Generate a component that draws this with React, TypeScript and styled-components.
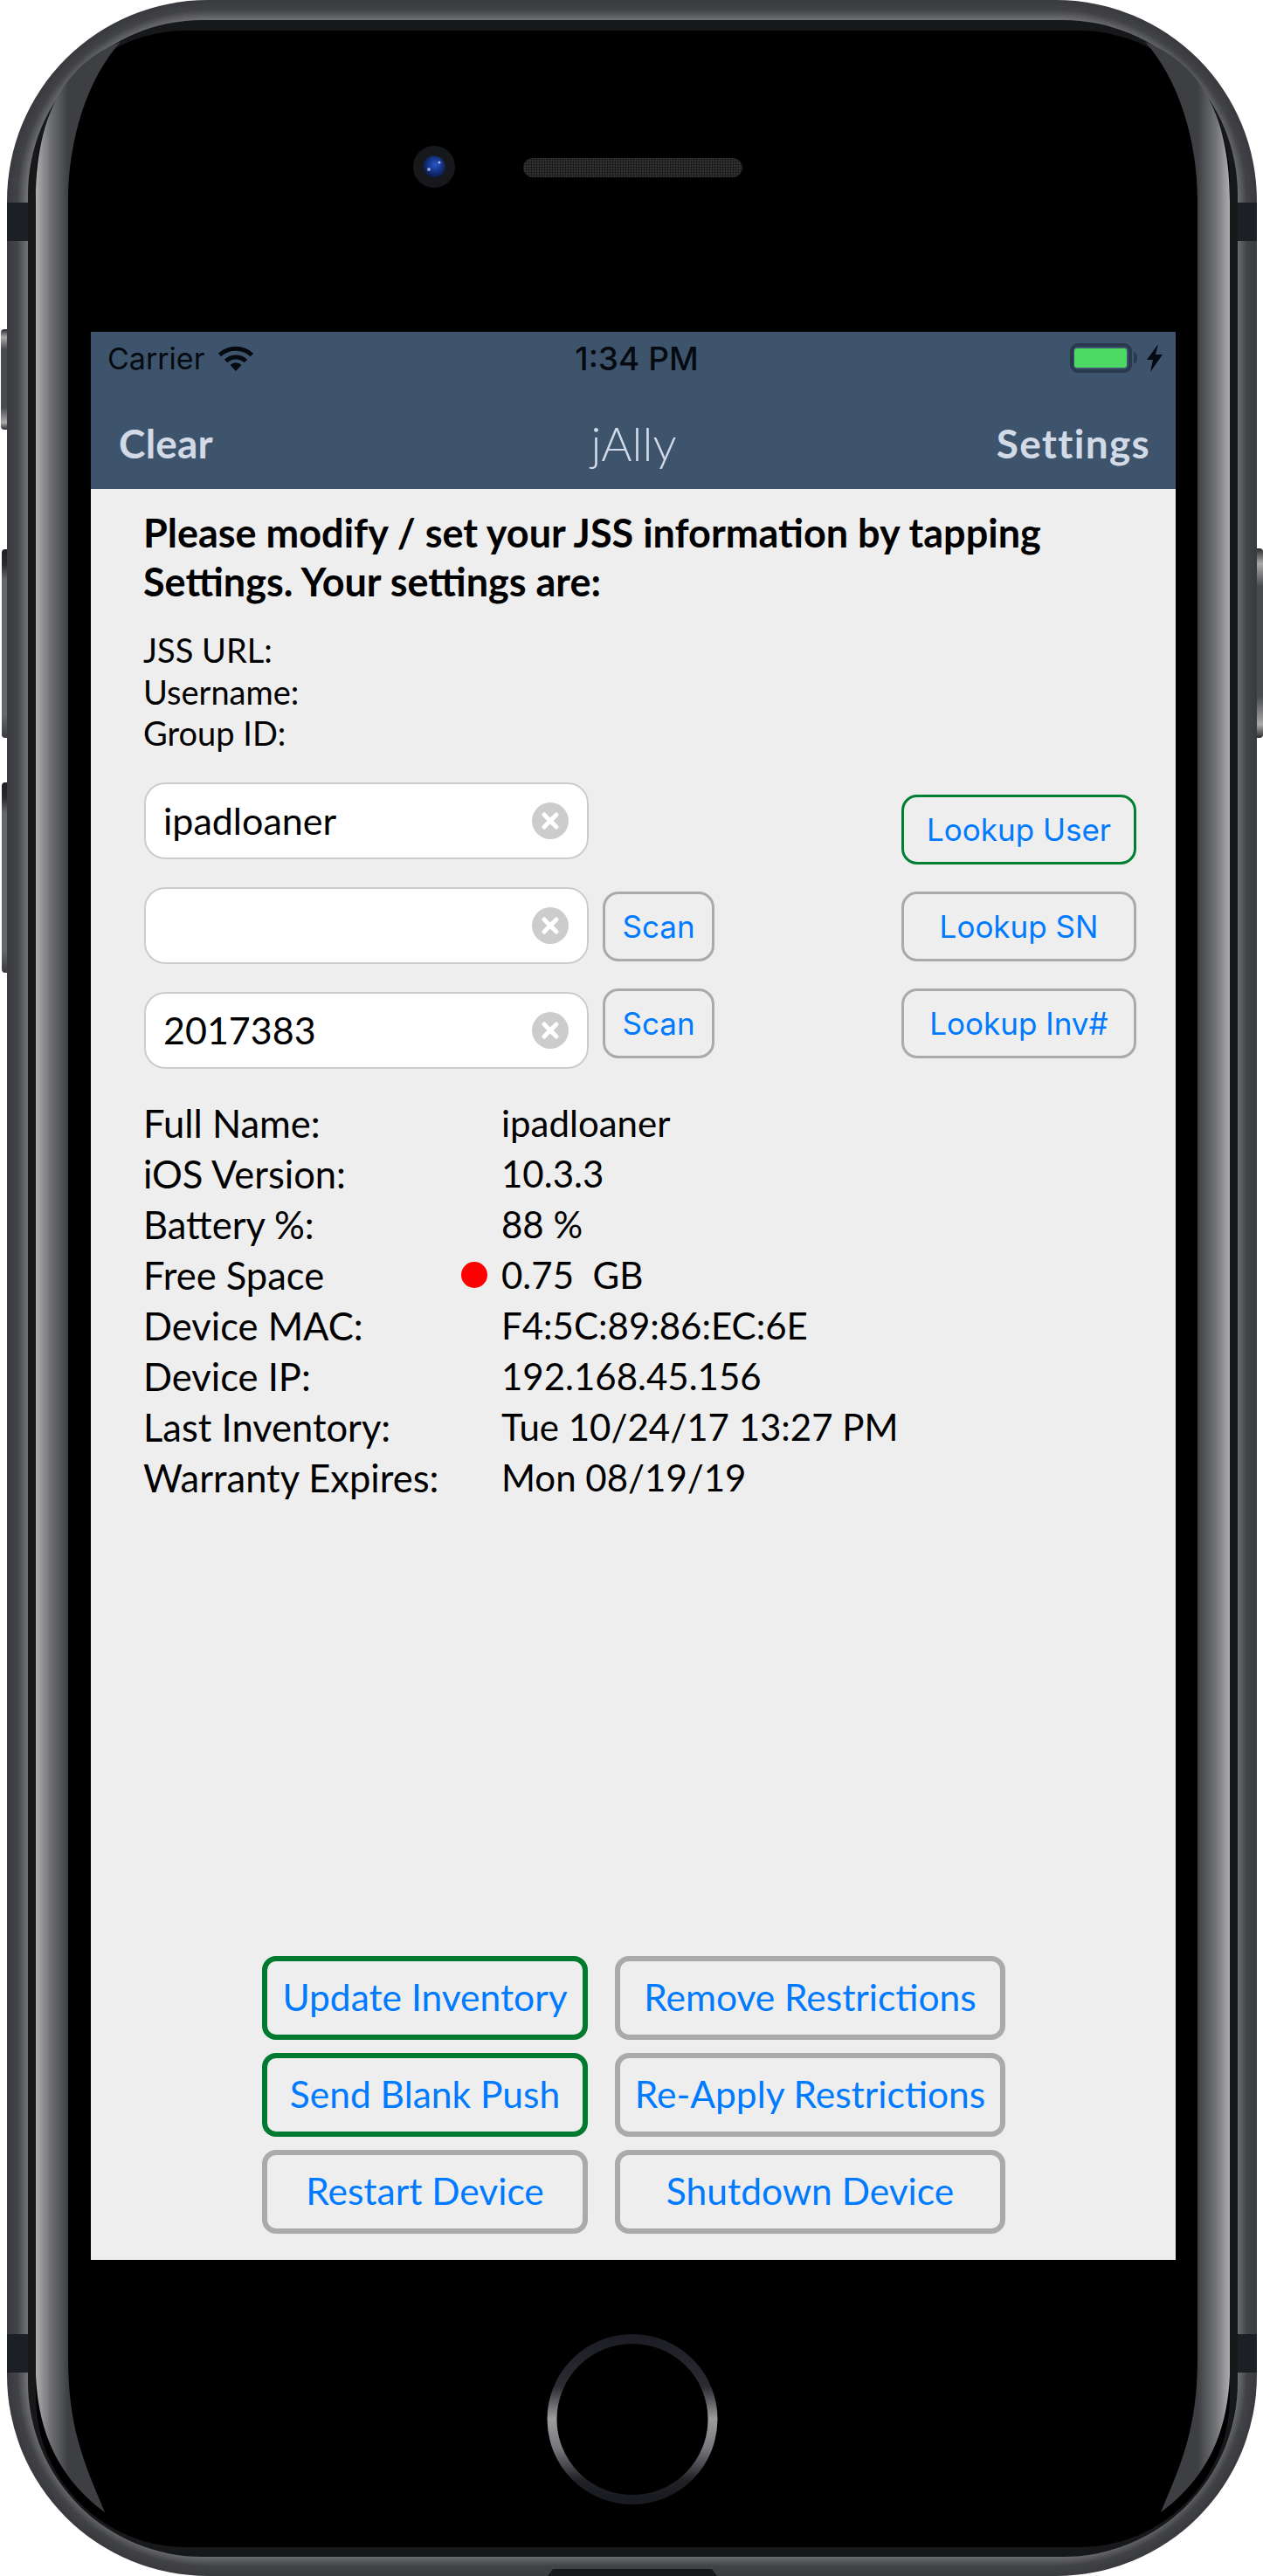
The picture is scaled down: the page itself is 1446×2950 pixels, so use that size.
import React from "react";
import styled, { createGlobalStyle } from "styled-components";

const Global = createGlobalStyle`
  html, body { margin: 0; padding: 0; background: #ffffff; }
  * { box-sizing: border-box; }
`;

const Device = styled.div`
  position: relative;
  width: 1446px;
  height: 2950px;
  overflow: hidden;
  padding: 380px 100px 362px 104px;
`;

const FrameArt = styled.svg`
  position: absolute;
  top: 0;
  left: 0;
`;

const Screen = styled.main`
  position: relative;
  width: 1242px;
  height: 2208px;
  display: flex;
  flex-direction: column;
  background: #eeeeee;
  font-family: "Lato", "Liberation Sans", sans-serif;
  color: #000000;
`;

const Header = styled.header`
  height: 180px;
  flex: none;
  background: #3e546c;
  display: flex;
  flex-direction: column;
`;

const StatusBar = styled.div`
  height: 60px;
  padding: 0 15px 0 19px;
  display: grid;
  grid-template-columns: 1fr auto 1fr;
  align-items: center;
  font-family: "Inter", "Liberation Sans", sans-serif;
  font-size: 34px;
  color: #050a10;
`;

const Carrier = styled.div`
  display: flex;
  align-items: center;
  gap: 15px;
  font-weight: 400;
`;

const Clock = styled.div`
  font-weight: 500;
  font-size: 37px;
  transform: translateX(2px);
`;

const Power = styled.div`
  display: flex;
  align-items: center;
  justify-content: flex-end;
  gap: 10px;
`;

const NavBar = styled.nav`
  height: 120px;
  padding: 15px 29px 0 32px;
  display: grid;
  grid-template-columns: 1fr auto 1fr;
  align-items: center;
  color: #d1dae6;
  font-size: 46px;
`;

const NavAction = styled.div<{ $end?: boolean }>`
  font-weight: 700;
  letter-spacing: ${(p) => (p.$end ? "1.3px" : "0.2px")};
  text-align: ${(p) => (p.$end ? "right" : "left")};
`;

const NavTitle = styled.div`
  font-weight: 300;
  font-size: 54px;
  transform: translateX(-1px);
`;

const Body = styled.div`
  flex: 1;
  display: flex;
  flex-direction: column;
  padding: 22px 40px 30px 60px;
`;

const Lead = styled.p`
  margin: 0;
  font-size: 45px;
  line-height: 56px;
  font-weight: 700;
  white-space: nowrap;
`;

const Settings = styled.div`
  margin-top: 27px;
  font-size: 38px;
  line-height: 47.5px;
`;

const Form = styled.section`
  margin-top: 32px;
  margin-left: 1px;
  display: flex;
`;

const FieldColumn = styled.div`
  width: 509px;
  display: flex;
  flex-direction: column;
  gap: 32px;
`;

const Field = styled.div`
  height: 88px;
  padding: 0 21px 0 20px;
  display: flex;
  align-items: center;
  justify-content: space-between;
  background: #ffffff;
  border: 2px solid #cccccc;
  border-radius: 24px;
  font-size: 43px;
`;

const ScanColumn = styled.div`
  margin-left: 16px;
  padding-top: 125px;
  display: flex;
  flex-direction: column;
  gap: 31px;
`;

const LookupColumn = styled.div`
  margin-left: 214px;
  padding-top: 14px;
  display: flex;
  flex-direction: column;
  gap: 31px;
`;

const SmallButton = styled.button<{ $wide?: boolean; $active?: boolean }>`
  width: ${(p) => (p.$wide ? "269px" : "128px")};
  height: 80px;
  padding: 0;
  background: transparent;
  border: 3px solid ${(p) => (p.$active ? "#007f33" : "#aaaaaa")};
  border-radius: 18px;
  color: #007aff;
  font-family: "Inter", "Liberation Sans", sans-serif;
  font-size: 35px;
  font-weight: 400;
  white-space: nowrap;
`;

const Facts = styled.dl`
  margin: 33px 0 0;
  display: grid;
  grid-template-columns: 410px 1fr;
  grid-auto-rows: 58px;
  align-items: center;
`;

const FactLabel = styled.dt`
  position: relative;
  font-size: 43.5px;
  font-weight: 400;
`;

const FactValue = styled.dd`
  margin: 0;
  font-size: 42px;
  font-weight: 400;
`;

const Dot = styled.span`
  position: absolute;
  right: 16px;
  top: 50%;
  width: 30px;
  height: 30px;
  margin-top: -15px;
  border-radius: 50%;
  background: #ff0000;
`;

const ActionGrid = styled.section`
  margin-top: auto;
  margin-left: 136px;
  display: grid;
  grid-template-columns: 373px 447px;
  grid-auto-rows: 96px;
  gap: 15px 31px;
`;

const ActionButton = styled.button<{ $active?: boolean }>`
  padding: 0 0 3px;
  background: transparent;
  border: 6px solid ${(p) => (p.$active ? "#007a2f" : "#aaaaaa")};
  border-radius: 16px;
  color: #007aff;
  font-family: "Lato", "Liberation Sans", sans-serif;
  font-size: 42.5px;
  font-weight: 400;
  white-space: nowrap;
`;

const lerp = (a: number[], b: number[], t: number) =>
  `rgb(${a.map((v, i) => Math.round(v + (b[i] - v) * t)).join(",")})`;

const rimColor = (i: number) => {
  const t = i / 22;
  if (t < 0.5) return lerp([58, 59, 63], [66, 67, 71], t / 0.5);
  return lerp([66, 67, 71], [110, 111, 115], (t - 0.5) / 0.5);
};

function SideKey({ x, y, w, h, id }: { x: number; y: number; w: number; h: number; id: string }) {
  return <rect x={x} y={y} width={w} height={h} rx="4" fill={`url(#${id})`} />;
}

function PhoneFrame() {
  return (
    <FrameArt width="1446" height="2950" viewBox="0 0 1446 2950" aria-hidden="true">
      <defs>
        <linearGradient id="keyV" x1="0" y1="0" x2="0" y2="1">
          <stop offset="0" stopColor="#202024" />
          <stop offset="0.08" stopColor="#2a2a2e" />
          <stop offset="0.16" stopColor="#66676b" />
          <stop offset="0.88" stopColor="#66676b" />
          <stop offset="1" stopColor="#3a3b3f" />
        </linearGradient>
        <linearGradient id="keyMute" x1="0" y1="0" x2="0" y2="1">
          <stop offset="0" stopColor="#2a2a2e" />
          <stop offset="0.08" stopColor="#aaaaaa" />
          <stop offset="0.2" stopColor="#4a4b4f" />
          <stop offset="0.78" stopColor="#4a4b4f" />
          <stop offset="0.93" stopColor="#aaaaaa" />
          <stop offset="1" stopColor="#2a2a2e" />
        </linearGradient>
        <linearGradient id="lipL" gradientUnits="userSpaceOnUse" x1="41" y1="0" x2="78" y2="0">
          <stop offset="0" stopColor="#aeaeae" />
          <stop offset="0.45" stopColor="#707175" />
          <stop offset="1" stopColor="#3e3f43" />
        </linearGradient>
        <linearGradient id="lipR" gradientUnits="userSpaceOnUse" x1="1408" y1="0" x2="1371" y2="0">
          <stop offset="0" stopColor="#aeaeae" />
          <stop offset="0.45" stopColor="#707175" />
          <stop offset="1" stopColor="#3e3f43" />
        </linearGradient>
        <linearGradient id="ring" x1="0" y1="0" x2="0" y2="1">
          <stop offset="0" stopColor="#1c1d25" />
          <stop offset="0.3" stopColor="#2c2d33" />
          <stop offset="0.5" stopColor="#9c9c9e" />
          <stop offset="0.68" stopColor="#77787c" />
          <stop offset="0.88" stopColor="#202127" />
          <stop offset="1" stopColor="#1a1b21" />
        </linearGradient>
        <radialGradient id="lens" cx="0.55" cy="0.4" r="0.6">
          <stop offset="0" stopColor="#2a56c8" />
          <stop offset="0.6" stopColor="#12307e" />
          <stop offset="1" stopColor="#0a1a40" />
        </radialGradient>
        <pattern id="mesh" width="3" height="3" patternUnits="userSpaceOnUse">
          <rect width="3" height="3" fill="#1c1c1c" />
          <rect width="2" height="2" fill="#333333" />
        </pattern>
      </defs>

      <SideKey x={1} y={377} w={14} h={115} id="keyMute" />
      <SideKey x={2} y={629} w={14} h={216} id="keyV" />
      <SideKey x={2} y={896} w={14} h={218} id="keyV" />
      <SideKey x={1430} y={628} w={16} h={217} id="keyMute" />

      {Array.from({ length: 23 }, (_, i) => (
        <rect
          key={i}
          x={8 + i}
          y={i}
          width={1431 - 2 * i}
          height={2950 - 2 * i}
          rx={230 - i}
          fill={rimColor(i)}
        />
      ))}

      <rect x="8" y="232" width="24" height="44" fill="#1c2024" />
      <rect x="1417" y="232" width="22" height="44" fill="#1c2024" />
      <rect x="8" y="2673" width="24" height="44" fill="#1c2024" />
      <rect x="1417" y="2673" width="22" height="44" fill="#1c2024" />

      <path d="M627 2950 L633 2942 H815 L821 2950 Z" fill="#17181a" />

      <rect x="32" y="23" width="1385" height="2905" rx="200" fill="#17181a" />
      <rect x="41" y="35" width="1367" height="2882" rx="172" fill="#000000" />

      <path
        d="M138 48 C92 66 41 110 41 230 L41 2720 C44 2790 70 2840 120 2877 C96 2820 78 2780 78 2700 L78 230 C78 160 100 90 138 48 Z"
        fill="url(#lipL)"
      />
      <path
        d="M1311 48 C1357 66 1408 110 1408 230 L1408 2720 C1405 2790 1379 2840 1329 2877 C1353 2820 1371 2780 1371 2700 L1371 230 C1371 160 1349 90 1311 48 Z"
        fill="url(#lipR)"
      />

      <circle cx="497" cy="191" r="24" fill="#17181b" />
      <circle cx="497" cy="191" r="12.5" fill="url(#lens)" />
      <circle cx="491" cy="194" r="2" fill="#8fa3c8" />
      <circle cx="503" cy="186" r="1.5" fill="#a8c4e8" />
      <rect x="599" y="181" width="251" height="22" rx="11" fill="url(#mesh)" />

      <circle cx="724" cy="2770.5" r="92" fill="none" stroke="url(#ring)" strokeWidth="11" />
    </FrameArt>
  );
}

const WifiIcon = () => (
  <svg width="42" height="30" viewBox="0 0 42 30" fill="none" stroke="#050a10" strokeWidth="5">
    <path d="M2.5 11.5 A27 27 0 0 1 39.5 11.5" />
    <path d="M9.5 18.5 A17 17 0 0 1 32.5 18.5" />
    <path d="M14.5 23 L21 30 L27.5 23 A9 9 0 0 0 14.5 23 Z" fill="#050a10" stroke="none" />
  </svg>
);

const BatteryIcon = () => (
  <svg width="78" height="34" viewBox="0 0 78 34">
    <rect x="2" y="2" width="67" height="30" rx="7" fill="none" stroke="#2a3a4e" strokeWidth="4" />
    <rect x="5" y="6" width="60" height="22" rx="3" fill="#4cd964" />
    <path d="M73 10 C76 11 77 14 77 17 C77 20 76 23 73 24 Z" fill="#2a3a4e" />
  </svg>
);

const BoltIcon = () => (
  <svg width="18" height="32" viewBox="0 0 18 32">
    <path d="M13 0 L0 18 H7 L4 32 L18 12 H10 Z" fill="#050a10" />
  </svg>
);

const ClearIcon = () => (
  <svg width="42" height="42" viewBox="0 0 42 42">
    <circle cx="21" cy="21" r="21" fill="#cccccc" />
    <path d="M14 14 L28 28 M28 14 L14 28" stroke="#ffffff" strokeWidth="5" strokeLinecap="round" />
  </svg>
);

const facts: { label: string; value: string; alert?: boolean }[] = [
  { label: "Full Name:", value: "ipadloaner" },
  { label: "iOS Version:", value: "10.3.3" },
  { label: "Battery %:", value: "88 %" },
  { label: "Free Space", value: "0.75\u00a0 GB", alert: true },
  { label: "Device MAC:", value: "F4:5C:89:86:EC:6E" },
  { label: "Device IP:", value: "192.168.45.156" },
  { label: "Last Inventory:", value: "Tue 10/24/17 13:27 PM" },
  { label: "Warranty Expires:", value: "Mon 08/19/19" },
];

const actions = [
  { label: "Update Inventory", active: true },
  { label: "Remove Restrictions" },
  { label: "Send Blank Push", active: true },
  { label: "Re-Apply Restrictions" },
  { label: "Restart Device" },
  { label: "Shutdown Device" },
];

export default function App() {
  return (
    <>
      <Global />
      <Device>
        <PhoneFrame />
        <Screen>
          <Header>
            <StatusBar>
              <Carrier>
                <span>Carrier</span>
                <WifiIcon />
              </Carrier>
              <Clock>1:34 PM</Clock>
              <Power>
                <BatteryIcon />
                <BoltIcon />
              </Power>
            </StatusBar>
            <NavBar>
              <NavAction>Clear</NavAction>
              <NavTitle>jAlly</NavTitle>
              <NavAction $end>Settings</NavAction>
            </NavBar>
          </Header>
          <Body>
            <Lead>
              Please modify / set your JSS information by tapping
              <br />
              Settings. Your settings are:
            </Lead>
            <Settings>
              JSS URL:
              <br />
              Username:
              <br />
              Group ID:
            </Settings>
            <Form>
              <FieldColumn>
                <Field>
                  ipadloaner
                  <ClearIcon />
                </Field>
                <Field>
                  <span />
                  <ClearIcon />
                </Field>
                <Field>
                  2017383
                  <ClearIcon />
                </Field>
              </FieldColumn>
              <ScanColumn>
                <SmallButton>Scan</SmallButton>
                <SmallButton>Scan</SmallButton>
              </ScanColumn>
              <LookupColumn>
                <SmallButton $wide $active>Lookup User</SmallButton>
                <SmallButton $wide>Lookup SN</SmallButton>
                <SmallButton $wide>Lookup Inv#</SmallButton>
              </LookupColumn>
            </Form>
            <Facts>
              {facts.map((f) => (
                <React.Fragment key={f.label}>
                  <FactLabel>
                    {f.label}
                    {f.alert && <Dot />}
                  </FactLabel>
                  <FactValue>{f.value}</FactValue>
                </React.Fragment>
              ))}
            </Facts>
            <ActionGrid>
              {actions.map((a) => (
                <ActionButton key={a.label} $active={a.active}>
                  {a.label}
                </ActionButton>
              ))}
            </ActionGrid>
          </Body>
        </Screen>
      </Device>
    </>
  );
}
